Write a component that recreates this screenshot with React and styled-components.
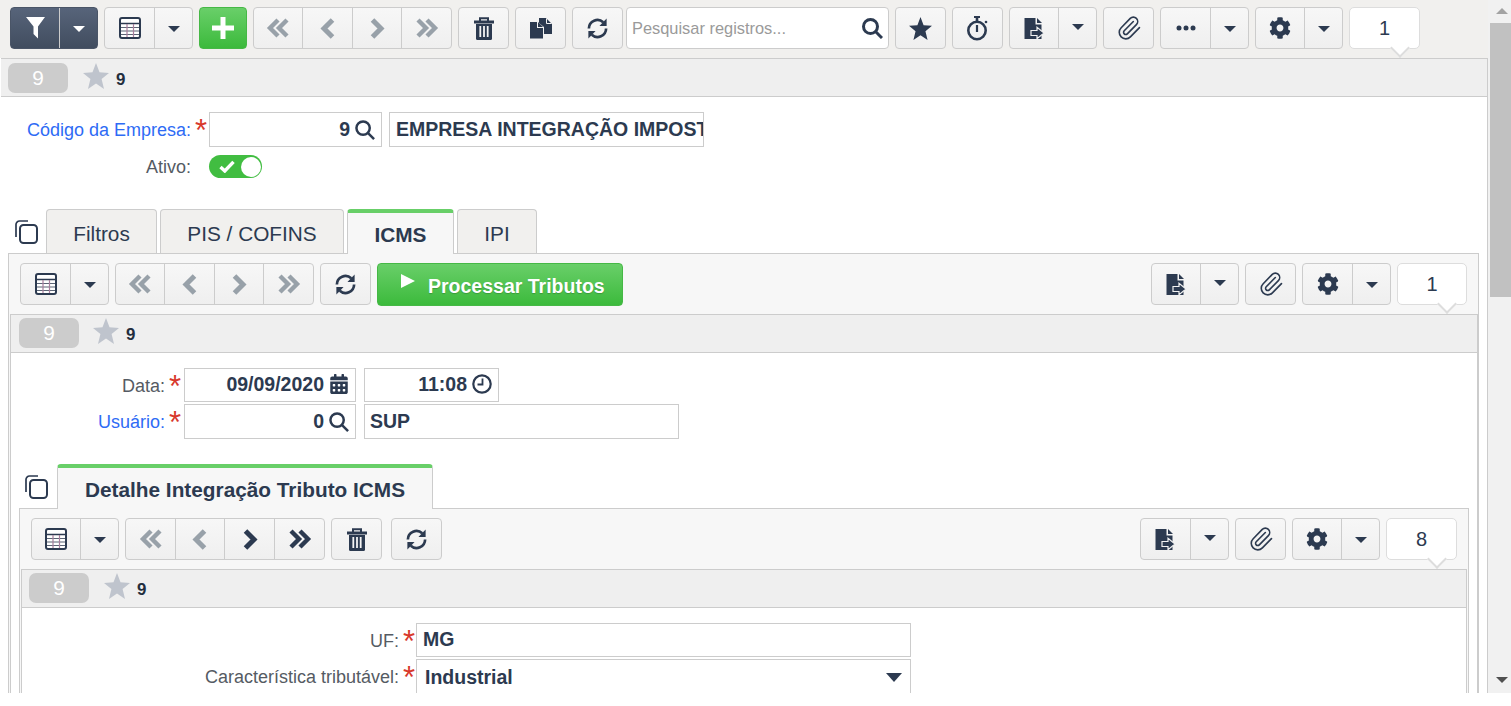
import React from "react";
import styled, { createGlobalStyle, css } from "styled-components";
import { FaCog, FaCalendarAlt } from "react-icons/fa";
import { Paperclip } from "lucide-react";

const INK = "#2c3a50";
const MUTED = "#98a1a9";

const Global = createGlobalStyle`
  html, body { margin: 0; padding: 0; height: 100%; overflow: hidden; background: #fff; }
  body { font-family: "Liberation Sans", Arial, sans-serif; color: ${INK}; }
  * { box-sizing: border-box; }
`;

const Shell = styled.div`
  display: flex;
  height: 693px;
  width: 1511px;
  overflow: hidden;
`;
const Main = styled.div`
  width: 1488px;
  flex: none;
  overflow: hidden;
`;
const Content = styled.div`
  border-right: 1px solid #ccc;
`;
const ScrollTrack = styled.div`
  position: relative;
  flex: 1;
  background: #f1f1f1;
`;
const ScrollThumb = styled.div`
  position: absolute;
  left: 2px;
  right: 0;
  top: 23px;
  height: 274px;
  background: #c1c1c1;
`;
const ScrollArrow = styled.div`
  position: absolute;
  left: 8px;
  ${(p) => (p.$down ? "bottom: 10px;" : "top: 8px;")}
  border-left: 6px solid transparent;
  border-right: 6px solid transparent;
  ${(p) => (p.$down ? "border-top: 6px solid #505050;" : "border-bottom: 6px solid #a3a3a3;")}
`;

const Toolbar = styled.div`
  display: flex;
  gap: 6px;
  align-items: flex-start;
  height: ${(p) => (p.$top ? 58 : 60)}px;
  padding: ${(p) => (p.$top ? "7px 0 0 10px" : "9px 11px 0 11px")};
  background: ${(p) => (p.$top ? "#f1f0ee" : "#f7f7f7")};
`;
const Spacer = styled.div`
  flex: 1;
`;
const Group = styled.div`
  display: flex;
  flex: none;
  height: 42px;
  margin-left: ${(p) => p.$ml || 0}px;
  border: 1px solid ${(p) => (p.$dark ? "#4a5567" : "#ccc")};
  border-radius: 4px;
  overflow: hidden;
  background: ${(p) =>
    p.$dark
      ? "linear-gradient(#57647a, #414d5f)"
      : p.$green
      ? "linear-gradient(#69cf69, #3cba3c)"
      : "linear-gradient(#f7f7f7, #efefef)"};
  ${(p) => p.$green && "border-color: #46b846;"}
`;
const Seg = styled.div`
  display: flex;
  align-items: center;
  justify-content: center;
  width: ${(p) => p.$w}px;
  & + & {
    border-left: 1px solid ${(p) => (p.$dark ? "#5e6a7e" : "#ccc")};
  }
`;
const Caret = styled.span`
  display: block;
  margin-top: ${(p) => p.$mt ?? 2}px;
  border-left: 6px solid transparent;
  border-right: 6px solid transparent;
  border-top: 6px solid ${(p) => (p.$light ? "#fff" : INK)};
`;

const Search = styled.div`
  display: flex;
  align-items: center;
  justify-content: space-between;
  flex: none;
  width: 263px;
  height: 42px;
  margin-left: -3px;
  padding: 0 5px 0 5px;
  background: #fff;
  border: 1px solid #ccc;
  border-radius: 4px;
  color: #9a9a9a;
  font-size: 16.4px;
`;
const Counter = styled.div`
  position: relative;
  flex: none;
  width: ${(p) => p.$w || 71}px;
  height: 42px;
  display: flex;
  align-items: center;
  justify-content: center;
  background: #fff;
  border: 1px solid #ddd;
  border-radius: 5px;
  font-size: 20px;
  color: ${INK};
  z-index: 2;
  &::after {
    content: "";
    position: absolute;
    right: 12px;
    bottom: -7px;
    width: 12px;
    height: 12px;
    background: #fff;
    border-right: 2px solid #ddd;
    border-bottom: 2px solid #ddd;
    transform: rotate(45deg);
  }
`;
const Process = styled.div`
  display: flex;
  flex: none;
  width: 246px;
  height: 43px;
  padding-left: 23px;
  align-items: center;
  gap: 13px;
  background: linear-gradient(#69cf69, #3cba3c);
  border: 1px solid #46b846;
  border-radius: 4px;
  color: #fff;
  font-size: 19.5px;
  font-weight: 700;
  text-shadow: 0 1px 1px rgba(0, 0, 0, 0.2);
  svg {
    margin-top: -7px;
  }
  span {
    margin-top: 3px;
  }
`;

const RecordBar = styled.div`
  display: flex;
  align-items: flex-start;
  height: 39px;
  margin-left: 1px;
  padding: ${(p) => (p.$first ? 4 : 3)}px 0 0 ${(p) => p.$inset ?? 7}px;
  background: #efefef;
  border-top: 1px solid #ccc;
  border-bottom: 1px solid #ccc;
`;
const Badge = styled.div`
  flex: none;
  width: 60px;
  height: 30px;
  display: flex;
  align-items: center;
  justify-content: center;
  border-radius: 7px;
  background: #cccccc;
  color: #fff;
  font-size: 20.8px;
`;
const StarWrap = styled.div`
  display: flex;
  align-items: center;
  height: 26px;
  margin-left: ${(p) => p.$ml ?? 15}px;
`;
const RecordId = styled.div`
  margin: 7px 0 0 7px;
  font-size: 16.9px;
  font-weight: 700;
  line-height: 20px;
  color: #232e3e;
`;

const Form = styled.div`
  display: flex;
  flex-direction: column;
  gap: ${(p) => p.$gap ?? 2}px;
  padding-top: 15px;
`;
const Row = styled.div`
  display: flex;
  align-items: flex-start;
  height: ${(p) => p.$h || 35}px;
`;
const Label = styled.div`
  flex: none;
  width: ${(p) => p.$w}px;
  height: 100%;
  display: flex;
  align-items: center;
  justify-content: flex-end;
  padding-top: ${(p) => p.$pt ?? 1}px;
  font-size: 18px;
  color: ${(p) => (p.$link ? "#2e6bf5" : "#555b63")};
  white-space: nowrap;
`;
const Required = styled.div`
  flex: none;
  width: ${(p) => p.$w}px;
  height: 100%;
  padding-left: 4px;
  font-size: 31px;
  line-height: 37px;
  color: #d8392c;
`;
const Field = styled.div`
  flex: none;
  display: flex;
  align-items: center;
  justify-content: ${(p) => (p.$right ? "flex-end" : "flex-start")};
  gap: 5px;
  width: ${(p) => p.$w}px;
  height: 100%;
  margin-left: ${(p) => p.$ml || 0}px;
  padding: ${(p) => p.$pt ?? 0}px ${(p) => p.$pr ?? 6}px ${(p) => p.$pb ?? 0}px ${(p) => p.$pl ?? 7}px;
  background: #fff;
  border: 1px solid #ccc;
  font-size: 19.5px;
  font-weight: 700;
  color: ${INK};
  white-space: nowrap;
  overflow: hidden;
`;
const SelectArrow = styled.span`
  margin-left: auto;
  border-left: 8px solid transparent;
  border-right: 8px solid transparent;
  border-top: 9px solid ${INK};
`;
const Toggle = styled.div`
  display: flex;
  align-items: center;
  justify-content: space-between;
  width: 53px;
  height: 23px;
  padding: 0 1px 0 10px;
  background: #41bd41;
  border-radius: 12px;
`;
const Knob = styled.span`
  width: 20px;
  height: 20px;
  border-radius: 50%;
  background: #fff;
`;

const TabStrip = styled.div`
  display: flex;
  align-items: flex-end;
  gap: 3px;
  height: 44px;
  margin-top: ${(p) => p.$mt}px;
  padding-left: ${(p) => p.$inset}px;
`;
const StripIcon = styled.div`
  align-self: flex-start;
  margin: 11px ${(p) => p.$mr}px 0 0;
  height: 23px;
  line-height: 0;
`;
const Tab = styled.div`
  position: relative;
  flex: none;
  display: flex;
  align-items: center;
  justify-content: center;
  width: ${(p) => p.$w}px;
  font-size: 20.8px;
  color: ${INK};
  border: 1px solid #ccc;
  border-bottom: 0;
  border-radius: 4px 4px 0 0;
  ${(p) =>
    p.$active
      ? css`
          height: 45px;
          margin-bottom: -1px;
          padding-top: 3px;
          background: #f7f7f7;
          border-top: 4px solid #68cf68;
          border-color: #68cf68 #ccc #ccc;
          font-weight: 700;
          z-index: 1;
        `
      : css`
          height: 44px;
          padding-top: 5px;
          background: #f1f0ee;
        `}
`;
const Panel = styled.div`
  width: ${(p) => p.$w}px;
  margin-left: 8px;
  border: 1px solid #ccc;
  background: #f7f7f7;
`;
const PanelBody = styled.div`
  margin: 0 ${(p) => p.$mr}px 0 1px;
  background: #fff;
  border-left: 1px solid #ccc;
  border-right: 1px solid #ccc;
  padding-bottom: 400px;
  ${RecordBar} { margin-left: 0; }
`;

/* ---------- drawn icons ---------- */
const Svg = ({ w, h, vb, children }) => (
  <svg width={w} height={h} viewBox={vb || `0 0 ${w} ${h}`} fill="none" style={{ display: "block", flex: "none" }}>
    {children}
  </svg>
);
const TableIcon = () => (
  <Svg w={22} h={22}>
    <rect x="1" y="1" width="20" height="20" rx="2" fill="#fff" stroke={INK} strokeWidth="2" />
    <path d="M2 6.500H20" stroke={INK} strokeWidth="1.600" />
    <path d="M2 10.500H20M2 14H20M2 17.500H20" stroke="#5b6474" strokeWidth="1.200" />
    <path d="M8 7V20M14.500 7V20" stroke="#a87e9c" strokeWidth="1.200" />
  </Svg>
);
const FilterIcon = () => (
  <Svg w={19} h={22}>
    <path d="M0 0H19L12 9.500V21.500L7.500 17V9.500Z" fill="#fff" />
  </Svg>
);
const PlusIcon = () => (
  <Svg w={22} h={22}>
    <path d="M8.500 0H13.500V8.500H22V13.500H13.500V22H8.500V13.500H0V8.500H8.500Z" fill="#fff" />
  </Svg>
);
const Chevron = ({ dir, on }) => (
  <Svg w={16} h={21}>
    <polyline
      points={dir === "l" ? "12.500,2 4,10.500 12.500,19" : "3.500,2 12,10.500 3.500,19"}
      stroke={on ? INK : MUTED}
      strokeWidth="5"
    />
  </Svg>
);
const DoubleChevron = ({ dir, on }) => (
  <Svg w={24} h={20}>
    <polyline
      points={dir === "l" ? "12,2 4,10 12,18" : "3,2 11,10 3,18"}
      stroke={on ? INK : MUTED}
      strokeWidth="4.400"
    />
    <polyline
      points={dir === "l" ? "21,2 13,10 21,18" : "12,2 20,10 12,18"}
      stroke={on ? INK : MUTED}
      strokeWidth="4.400"
    />
  </Svg>
);
const TrashIcon = () => (
  <Svg w={20} h={23}>
    <path d="M6 4V1.200H14V4" stroke={INK} strokeWidth="2" />
    <path d="M0 3.500H20V6.500H0Z" fill={INK} />
    <path d="M2 7H18V21.500a1.500 1.500 0 0 1-1.500 1.500H3.500a1.500 1.500 0 0 1-1.500-1.500Z" fill={INK} />
    <path d="M6.300 9V20M10 9V20M13.700 9V20" stroke="#f4f4f4" strokeWidth="1.800" />
  </Svg>
);
const CopySolid = () => (
  <Svg w={22} h={21}>
    <path d="M9 0H16L22 6V16H14V9L9 5Z" fill={INK} />
    <path d="M16.500 0.500V5.500H21.500" stroke="#f4f4f4" strokeWidth="1" />
    <path d="M0 4H7V10H13V20.500H0Z" fill={INK} />
    <path d="M8 4L13 9H8Z" fill={INK} />
  </Svg>
);
const SyncIcon = () => (
  <Svg w={23} h={23} vb="0 0 24 24">
    <path d="M3 12A9 9 0 0 1 18 5.500" stroke={INK} strokeWidth="2.800" />
    <path d="M21.500 1.500V9.500H14Z" fill={INK} />
    <path d="M21 12A9 9 0 0 1 6 18.500" stroke={INK} strokeWidth="2.800" />
    <path d="M2.500 22.500V14.500H10Z" fill={INK} />
  </Svg>
);
const SearchIcon = ({ size = 21, sw = 3 }) => (
  <Svg w={size} h={size} vb="0 0 21 21">
    <circle cx="8.500" cy="8.500" r="7" stroke={INK} strokeWidth={sw} />
    <path d="M13.500 13.500L20 20" stroke={INK} strokeWidth={sw} />
  </Svg>
);
const StarIcon = ({ size, color }) => (
  <Svg w={size} h={size} vb="0 0 26 26">
    <path d="M13 0L16.500 9.300L26 9.900L18.600 16.100L21 26L13 20.500L5 26L7.400 16.100L0 9.900L9.500 9.300Z" fill={color} />
  </Svg>
);
const StopwatchIcon = () => (
  <Svg w={21} h={25}>
    <circle cx="10" cy="14.500" r="8.700" stroke={INK} strokeWidth="2.600" />
    <path d="M10 1V5" stroke={INK} strokeWidth="2.600" />
    <path d="M7 1H13" stroke={INK} strokeWidth="1.800" />
    <path d="M10 9V16" stroke={INK} strokeWidth="2.200" />
    <circle cx="19" cy="6" r="1.300" fill={INK} />
  </Svg>
);
const ExportIcon = () => (
  <Svg w={21} h={21}>
    <path d="M0.500 0H11.500V6.500H17.500V21H0.500Z" fill={INK} />
    <path d="M13 0L18 5H13Z" fill={INK} />
    <path d="M7 12.500H13V9.300L20 15L13 20.700V17.500H7Z" fill={INK} stroke="#f2f2f2" strokeWidth="1.200" />
  </Svg>
);
const EllipsisIcon = () => (
  <Svg w={20} h={6}>
    <circle cx="3" cy="3" r="2.500" fill={INK} />
    <circle cx="10" cy="3" r="2.500" fill={INK} />
    <circle cx="17" cy="3" r="2.500" fill={INK} />
  </Svg>
);
const ClockIcon = () => (
  <Svg w={20} h={20}>
    <circle cx="10" cy="10" r="8.700" stroke={INK} strokeWidth="2.200" />
    <path d="M10.500 4.500V10.500H5.500" stroke={INK} strokeWidth="1.800" />
  </Svg>
);
const CheckIcon = () => (
  <Svg w={16} h={13}>
    <path d="M1.500 7L5.800 11L14.500 1.800" stroke="#fff" strokeWidth="3.400" />
  </Svg>
);
const PlayIcon = () => (
  <Svg w={14} h={14}>
    <path d="M0 0L14 7L0 14Z" fill="#fff" />
  </Svg>
);
const TabsIcon = () => (
  <Svg w={23} h={24}>
    <path d="M1 17V4.500A3.500 3.500 0 0 1 4.500 1H13" stroke={INK} strokeWidth="1.700" />
    <rect x="5" y="5" width="17" height="18" rx="3.500" stroke={INK} strokeWidth="2" />
  </Svg>
);
const ClipIcon = () => <Paperclip size={26} strokeWidth={1.5} color={INK} style={{ display: "block" }} />;

/* ---------- shared toolbar pieces ---------- */
const GridGroup = ({ a = 49 }) => (
  <Group>
    <Seg $w={a}><TableIcon /></Seg>
    <Seg $w={38}><Caret /></Seg>
  </Group>
);
const NavGroup = ({ live, widths = [48, 50, 49, 50] }) => (
  <Group>
    <Seg $w={widths[0]}><DoubleChevron dir="l" /></Seg>
    <Seg $w={widths[1]}><Chevron dir="l" /></Seg>
    <Seg $w={widths[2]}><Chevron dir="r" on={live} /></Seg>
    <Seg $w={widths[3]}><DoubleChevron dir="r" on={live} /></Seg>
  </Group>
);
const Single = ({ children, ml }) => (
  <Group $ml={ml}>
    <Seg $w={49}>{children}</Seg>
  </Group>
);
const ExportGroup = ({ a = 48 }) => (
  <Group>
    <Seg $w={a}><ExportIcon /></Seg>
    <Seg $w={38}><Caret $mt={-2} /></Seg>
  </Group>
);
const GearGroup = ({ a = 48 }) => (
  <Group>
    <Seg $w={a}><FaCog size={22} color={INK} /></Seg>
    <Seg $w={38}><Caret /></Seg>
  </Group>
);
const Record = ({ first, inset, starGap }) => (
  <RecordBar $first={first} $inset={inset}>
    <Badge>9</Badge>
    <StarWrap $ml={starGap}><StarIcon size={26} color="#bfc4cd" /></StarWrap>
    <RecordId>9</RecordId>
  </RecordBar>
);

export default function App() {
  return (
    <>
      <Global />
      <Shell>
        <Main>
          <Toolbar $top>
            <Group $dark>
              <Seg $w={48}><FilterIcon /></Seg>
              <Seg $w={38} $dark><Caret $light /></Seg>
            </Group>
            <GridGroup />
            <Group $green><Seg $w={46}><PlusIcon /></Seg></Group>
            <NavGroup />
            <Single><TrashIcon /></Single>
            <Single><CopySolid /></Single>
            <Single><SyncIcon /></Single>
            <Search>
              <span>Pesquisar registros...</span>
              <SearchIcon />
            </Search>
            <Single><StarIcon size={23} color={INK} /></Single>
            <Single><StopwatchIcon /></Single>
            <ExportGroup />
            <Single><ClipIcon /></Single>
            <Group>
              <Seg $w={49}><EllipsisIcon /></Seg>
              <Seg $w={38}><Caret /></Seg>
            </Group>
            <GearGroup />
            <Counter>1</Counter>
          </Toolbar>
          <Content>
            <Record first />
            <Form $gap={8}>
              <Row>
                <Label $w={191} $link>Código da Empresa:</Label>
                <Required $w={18}>*</Required>
                <Field $w={173} $right>9<SearchIcon size={20} sw={2.6} /></Field>
                <Field $w={315} $ml={7} $pl={6}>EMPRESA INTEGRAÇÃO IMPOSTOS</Field>
              </Row>
              <Row $h={23}>
                <Label $w={191}>Ativo:</Label>
                <Required $w={18} />
                <Toggle><CheckIcon /><Knob /></Toggle>
              </Row>
            </Form>
            <TabStrip $mt={31} $inset={15}>
              <StripIcon $mr={5}><TabsIcon /></StripIcon>
              <Tab $w={111}>Filtros</Tab>
              <Tab $w={184}>PIS / COFINS</Tab>
              <Tab $w={107} $active>ICMS</Tab>
              <Tab $w={80}>IPI</Tab>
            </TabStrip>
            <Panel $w={1471}>
              <Toolbar>
                <GridGroup />
                <NavGroup />
                <Single><SyncIcon /></Single>
                <Process>
                  <PlayIcon />
                  <span>Processar Tributos</span>
                </Process>
                <Spacer />
                <ExportGroup />
                <Single><ClipIcon /></Single>
                <GearGroup a={49} />
                <Counter $w={70}>1</Counter>
              </Toolbar>
              <PanelBody $mr={0}>
                <Record inset={8} starGap={14} />
                <Form>
                  <Row $h={34}>
                    <Label $w={154} $pt={3}>Data:</Label>
                    <Required $w={19}>*</Required>
                    <Field $w={172} $right $pb={2}>09/09/2020<FaCalendarAlt size={20} /></Field>
                    <Field $w={135} $ml={8} $right $pb={2}>11:08<ClockIcon /></Field>
                  </Row>
                  <Row>
                    <Label $w={154} $link>Usuário:</Label>
                    <Required $w={19}>*</Required>
                    <Field $w={172} $right>0<SearchIcon size={20} sw={2.6} /></Field>
                    <Field $w={315} $ml={8} $pl={5}>SUP</Field>
                  </Row>
                </Form>
                <TabStrip $mt={25} $inset={14}>
                  <StripIcon $mr={6}><TabsIcon /></StripIcon>
                  <Tab $w={376} $active>Detalhe Integração Tributo ICMS</Tab>
                </TabStrip>
                <Panel $w={1450}>
                  <Toolbar>
                    <GridGroup a={48} />
                    <NavGroup live widths={[49, 49, 50, 50]} />
                    <Single><TrashIcon /></Single>
                    <Single ml={3}><SyncIcon /></Single>
                    <Spacer />
                    <ExportGroup a={49} />
                    <Single><ClipIcon /></Single>
                    <GearGroup />
                    <Counter>8</Counter>
                  </Toolbar>
                  <PanelBody $mr={1}>
                    <Record />
                    <Form>
                      <Row $h={34}>
                        <Label $w={377} $pt={3}>UF:</Label>
                        <Required $w={17}>*</Required>
                        <Field $w={495} $pl={6} $pb={2}>MG</Field>
                      </Row>
                      <Row>
                        <Label $w={377}>Característica tributável:</Label>
                        <Required $w={17}>*</Required>
                        <Field $w={495} $pl={8} $pr={8} $pt={2}>Industrial<SelectArrow /></Field>
                      </Row>
                    </Form>
                  </PanelBody>
                </Panel>
              </PanelBody>
            </Panel>
          </Content>
        </Main>
        <ScrollTrack>
          <ScrollArrow />
          <ScrollThumb />
          <ScrollArrow $down />
        </ScrollTrack>
      </Shell>
    </>
  );
}
